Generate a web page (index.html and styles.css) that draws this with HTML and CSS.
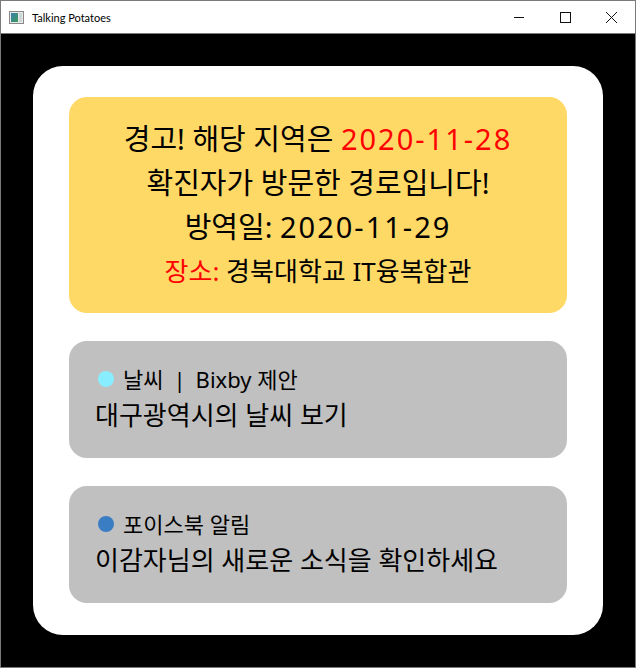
FILE: index.html
```html
<!DOCTYPE html>
<html lang="ko">
<head>
    <meta charset="UTF-8">
    <meta name="viewport" content="width=device-width, initial-scale=1.0">
    <title>Talking Potatoes</title>
    <link rel="stylesheet" href="styles.css">
</head>
<body>
    <div class="window">
        <!-- Title bar -->
        <div class="titlebar">
            <svg class="app-icon" width="15" height="13" viewBox="0 0 15 13">
                <defs>
                    <linearGradient id="pane" x1="0" y1="0" x2="1" y2="1">
                        <stop offset="0" stop-color="#3a7fb0"/>
                        <stop offset="1" stop-color="#3c9a5a"/>
                    </linearGradient>
                </defs>
                <rect x="0.5" y="0.5" width="14" height="12" fill="#e8e8e8" stroke="#8a8a8a"/>
                <rect x="2" y="2" width="7" height="9" fill="url(#pane)"/>
                <rect x="10" y="2" width="3" height="9" fill="#cfd8d8"/>
            </svg>
            <span class="title">Talking Potatoes</span>
            <div class="controls">
                <svg width="46" height="32" viewBox="0 0 46 32"><path d="M18 16.5h10" stroke="#111" stroke-width="1"/></svg>
                <svg width="46" height="32" viewBox="0 0 46 32"><rect x="18.5" y="11.5" width="10" height="10" fill="none" stroke="#111" stroke-width="1"/></svg>
                <svg width="46" height="32" viewBox="0 0 46 32"><path d="M18 11l11 11M29 11l-11 11" stroke="#111" stroke-width="1"/></svg>
            </div>
        </div>

        <!-- Content -->
        <div class="content">
            <div class="card">
                <div class="alert">
                    <p>경고! 해당 지역은 <span class="red num">2020-11-28</span></p>
                    <p>확진자가 방문한 경로입니다!</p>
                    <p>방역일: <span class="num">2020-11-29</span></p>
                    <p class="place"><span class="red">장소:</span> 경북대학교 IT융복합관</p>
                </div>

                <div class="notice">
                    <div class="notice-head"><span class="dot dot-cyan"></span>날씨<span class="sep">|</span>Bixby 제안</div>
                    <div class="notice-body">대구광역시의 날씨 보기</div>
                </div>

                <div class="notice">
                    <div class="notice-head"><span class="dot dot-blue"></span>포이스북 알림</div>
                    <div class="notice-body">이감자님의 새로운 소식을 확인하세요</div>
                </div>
            </div>
        </div>
    </div>
</body>
</html>
```

FILE: styles.css
```css
body {
    margin: 0;
    font-family: "Noto Sans", "Noto Sans CJK KR", sans-serif;
}
.window {
    width: 636px;
    height: 668px;
    box-sizing: border-box;
    border: 1px solid #7a7a7a;
    background-color: #000;
    display: flex;
    flex-direction: column;
}
.titlebar {
    height: 32px;
    background-color: #fff;
    border-bottom: 1px solid #7a7a7a;
    display: flex;
    align-items: center;
}
.app-icon {
    margin-left: 8px;
    margin-right: 8px;
}
.title {
    font-family: Lato, "Noto Sans", sans-serif;
    font-size: 11px;
    color: #000;
    flex: 1;
}
.controls {
    display: flex;
    margin-right: 1px;
}
.controls svg {
    display: block;
}
.content {
    flex: 1;
    padding: 32px;
    display: flex;
}
.card {
    flex: 1;
    background-color: #fff;
    border-radius: 30px;
    padding: 31px 36px 32px;
    display: flex;
    flex-direction: column;
    gap: 28px;
}
.alert {
    height: 216px;
    box-sizing: border-box;
    background-color: #ffd966;
    border-radius: 18px;
    padding-top: 20px;
    text-align: center;
    color: #000;
}
.alert p {
    margin: 0;
    font-size: 29px;
    line-height: 44px;
}
.alert .place {
    font-size: 26px;
}
.num {
    letter-spacing: 2px;
}
.red {
    color: #ff0000;
}
.notice {
    height: 117px;
    box-sizing: border-box;
    background-color: #c0c0c0;
    border-radius: 18px;
    padding: 22px 26px 0;
    color: #000;
}
.notice-head {
    display: flex;
    align-items: center;
    font-size: 22px;
    line-height: 32px;
    padding-left: 3px;
    white-space: pre;
}
.sep {
    margin: 0 10px;
}
.dot {
    width: 16px;
    height: 16px;
    border-radius: 50%;
    margin-right: 9px;
}
.dot-cyan {
    background-color: #88eeff;
}
.dot-blue {
    background-color: #3a7dc2;
}
.notice-body {
    font-size: 26px;
    line-height: 40px;
}
```
